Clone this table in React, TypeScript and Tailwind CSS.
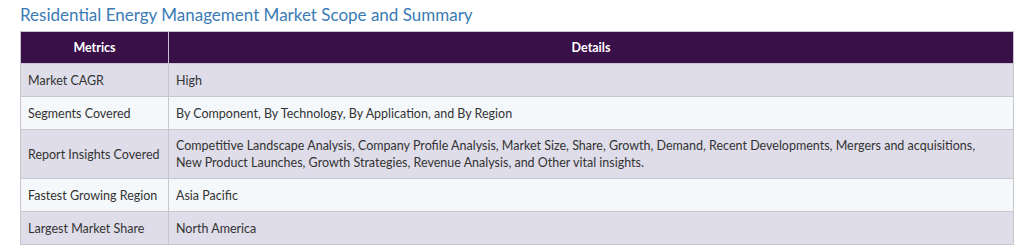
import React from 'react'

const rows = [
  ['Market CAGR', 'High'],
  ['Segments Covered', 'By Component, By Technology, By Application, and By Region'],
  [
    'Report Insights Covered',
    'Competitive Landscape Analysis, Company Profile Analysis, Market Size, Share, Growth, Demand, Recent Developments, Mergers and acquisitions, New Product Launches, Growth Strategies, Revenue Analysis, and Other vital insights.',
  ],
  ['Fastest Growing Region', 'Asia Pacific'],
  ['Largest Market Share', 'North America'],
]

export default function App() {
  return (
    <div className="bg-white w-[1024px] h-[250px] pl-5 pr-[10px] pt-[4px] font-['Lato',sans-serif]">
      <h2 className="text-[17px] leading-[22px] text-[#3b7bb5] mb-[5px]">
        Residential Energy Management Market Scope and Summary
      </h2>
      <table className="w-[994px] border-collapse text-[12.5px] leading-[17px] text-[#333]">
        <thead>
          <tr className="bg-[#3a1049] text-white h-[32px]">
            <th className="w-[148px] border border-[#c9c3d3] font-bold text-center">Metrics</th>
            <th className="border border-[#c9c3d3] font-bold text-center">Details</th>
          </tr>
        </thead>
        <tbody>
          {rows.map(([k, v], i) => (
            <tr key={k} className={i % 2 === 0 ? 'bg-[#dfdde9]' : 'bg-[#f4f8fb]'}>
              <td className="border border-[#c8c8cc] px-[7px] py-[7px] h-[33px] whitespace-nowrap align-middle">{k}</td>
              <td className="border border-[#c8c8cc] pl-[7px] pr-[18px] py-[7px] h-[33px] align-middle">{v}</td>
            </tr>
          ))}
        </tbody>
      </table>
    </div>
  )
}
